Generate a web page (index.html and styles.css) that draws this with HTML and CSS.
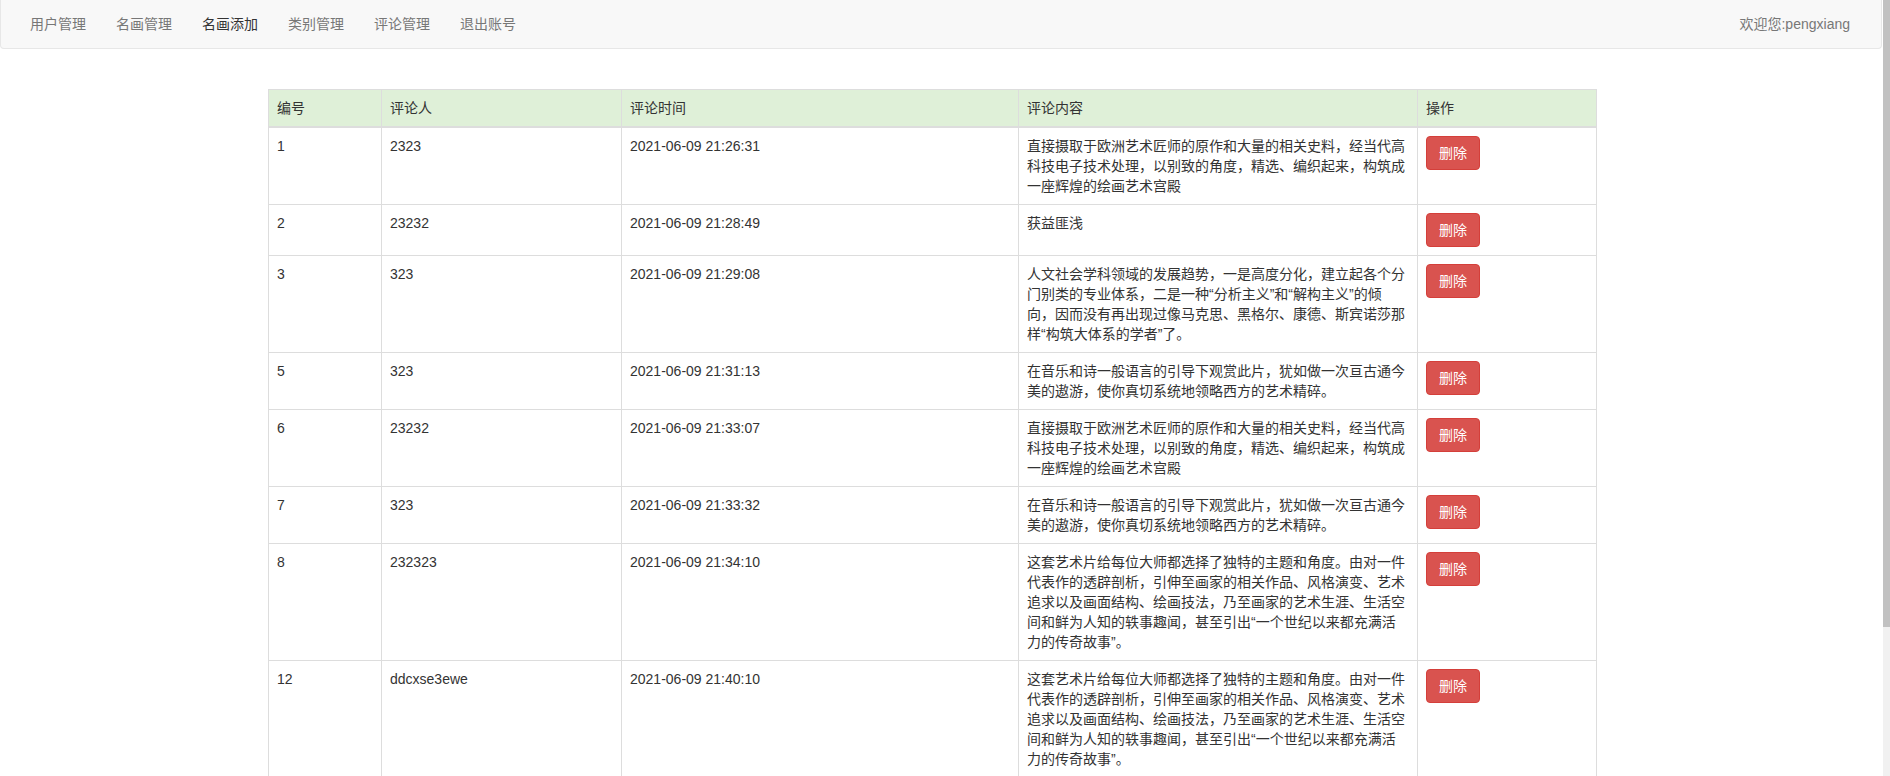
FILE: index.html
```html
<!DOCTYPE html>
<html lang="zh-CN">
<head>
<meta charset="utf-8">
<title>评论管理</title>
<link rel="stylesheet" href="styles.css">
</head>
<body>
<div class="page">
  <nav class="navbar">
    <ul class="nav">
      <li><a href="#">用户管理</a></li>
      <li><a href="#">名画管理</a></li>
      <li><a href="#" class="active">名画添加</a></li>
      <li><a href="#">类别管理</a></li>
      <li><a href="#">评论管理</a></li>
      <li><a href="#">退出账号</a></li>
    </ul>
    <div class="welcome">欢迎您:pengxiang</div>
  </nav>

  <table class="grid">
    <colgroup>
      <col class="c-id">
      <col class="c-user">
      <col class="c-time">
      <col class="c-text">
      <col class="c-op">
    </colgroup>
    <thead>
      <tr><th>编号</th><th>评论人</th><th>评论时间</th><th>评论内容</th><th>操作</th></tr>
    </thead>
    <tbody>
      <tr>
        <td>1</td><td>2323</td><td>2021-06-09 21:26:31</td>
        <td>直接摄取于欧洲艺术匠师的原作和大量的相关史料，经当代高科技电子技术处理，以别致的角度，精选、编织起来，构筑成一座辉煌的绘画艺术宫殿</td>
        <td><button class="btn-del">删除</button></td>
      </tr>
      <tr>
        <td>2</td><td>23232</td><td>2021-06-09 21:28:49</td>
        <td>获益匪浅</td>
        <td><button class="btn-del">删除</button></td>
      </tr>
      <tr>
        <td>3</td><td>323</td><td>2021-06-09 21:29:08</td>
        <td>人文社会学科领域的发展趋势，一是高度分化，建立起各个分门别类的专业体系，二是一种“分析主义”和“解构主义”的倾向，因而没有再出现过像马克思、黑格尔、康德、斯宾诺莎那样“构筑大体系的学者”了。</td>
        <td><button class="btn-del">删除</button></td>
      </tr>
      <tr>
        <td>5</td><td>323</td><td>2021-06-09 21:31:13</td>
        <td>在音乐和诗一般语言的引导下观赏此片，犹如做一次亘古通今美的遨游，使你真切系统地领略西方的艺术精碎。</td>
        <td><button class="btn-del">删除</button></td>
      </tr>
      <tr>
        <td>6</td><td>23232</td><td>2021-06-09 21:33:07</td>
        <td>直接摄取于欧洲艺术匠师的原作和大量的相关史料，经当代高科技电子技术处理，以别致的角度，精选、编织起来，构筑成一座辉煌的绘画艺术宫殿</td>
        <td><button class="btn-del">删除</button></td>
      </tr>
      <tr>
        <td>7</td><td>323</td><td>2021-06-09 21:33:32</td>
        <td>在音乐和诗一般语言的引导下观赏此片，犹如做一次亘古通今美的遨游，使你真切系统地领略西方的艺术精碎。</td>
        <td><button class="btn-del">删除</button></td>
      </tr>
      <tr>
        <td>8</td><td>232323</td><td>2021-06-09 21:34:10</td>
        <td>这套艺术片给每位大师都选择了独特的主题和角度。由对一件代表作的透辟剖析，引伸至画家的相关作品、风格演变、艺术追求以及画面结构、绘画技法，乃至画家的艺术生涯、生活空间和鲜为人知的轶事趣闻，甚至引出“一个世纪以来都充满活力的传奇故事”。</td>
        <td><button class="btn-del">删除</button></td>
      </tr>
      <tr>
        <td>12</td><td>ddcxse3ewe</td><td>2021-06-09 21:40:10</td>
        <td>这套艺术片给每位大师都选择了独特的主题和角度。由对一件代表作的透辟剖析，引伸至画家的相关作品、风格演变、艺术追求以及画面结构、绘画技法，乃至画家的艺术生涯、生活空间和鲜为人知的轶事趣闻，甚至引出“一个世纪以来都充满活力的传奇故事”。</td>
        <td><button class="btn-del">删除</button></td>
      </tr>
    </tbody>
  </table>
</div>
<div class="scrollbar"><div class="thumb"></div></div>
</body>
</html>
```

FILE: styles.css
```css
html, body {
  margin: 0;
  padding: 0;
  background: #fff;
}
body {
  font-family: "Liberation Sans", "Noto Sans CJK SC", sans-serif;
  font-size: 14px;
  line-height: 20px;
  color: #333;
  overflow: hidden;
}
.page {
  margin-right: 8px;
}
.navbar {
  display: flex;
  align-items: center;
  box-sizing: border-box;
  height: 49px;
  padding: 0 14px;
  background: #f8f8f8;
  border: 1px solid #e7e7e7;
  border-top: 0;
  border-radius: 0 0 4px 4px;
}
.nav {
  display: flex;
  list-style: none;
  margin: 0;
  padding: 0;
}
.nav a {
  display: block;
  padding: 13px 15px 14px;
  color: #777;
  text-decoration: none;
}
.nav a.active {
  color: #333;
}
.welcome {
  margin-left: auto;
  padding: 13px 17px 14px 15px;
  color: #777;
}
.grid {
  margin: 40px 0 0 268px;
  width: 1328px;
  table-layout: fixed;
  border-collapse: collapse;
  border-spacing: 0;
}
.c-id { width: 113px; }
.c-user { width: 240px; }
.c-time { width: 397px; }
.c-text { width: 399px; }
.c-op { width: 179px; }
.grid th,
.grid td {
  padding: 8px;
  border: 1px solid #ddd;
  text-align: left;
  vertical-align: top;
  font-weight: normal;
  line-height: 20px;
}
.grid thead th {
  background: #dff0d8;
  border-bottom-width: 2px;
}
.btn-del {
  display: inline-block;
  padding: 6px 12px;
  font-family: inherit;
  font-size: 14px;
  line-height: 20px;
  color: #fff;
  background: #d9534f;
  border: 1px solid #d43f3a;
  border-radius: 4px;
  cursor: pointer;
}
.scrollbar {
  position: fixed;
  top: 0;
  right: 0;
  width: 7px;
  height: 100%;
  background: #f1f1f1;
}
.thumb {
  height: 627px;
  background: #c1c1c1;
}
```
